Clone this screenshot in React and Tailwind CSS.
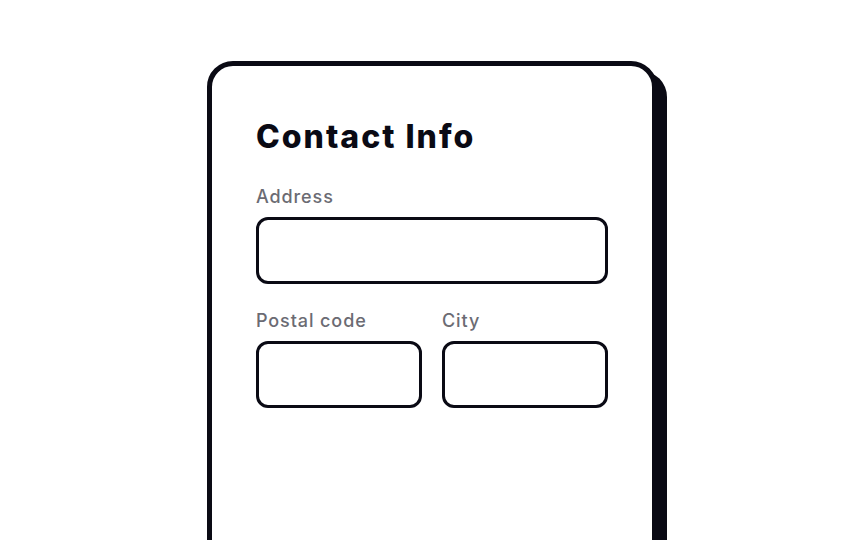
export default function App() {
    return (
        <div className="min-h-[540px] overflow-hidden bg-white font-['Inter',sans-serif]">
            <div className="flex justify-center pt-[61px]">
                <div className="h-[600px] w-[450px] rounded-[26px] border-[5px] border-[#0a0a14] bg-white px-[44px] pt-[51px] shadow-[10px_10px_0_0_#0a0a14]">
                    <h1 className="text-[32px] leading-10 font-extrabold tracking-[2px] text-[#0a0a14]">Contact Info</h1>

                    <div className="mt-[26px]">
                        <label className="block text-lg leading-7 font-medium tracking-[0.9px] text-[#6b6b73]">Address</label>
                        <input type="text" className="mt-1.5 block h-[67px] w-full rounded-xl border-[3px] border-[#0a0a14] bg-white outline-none" />
                    </div>

                    <div className="mt-[23px] grid grid-cols-2 gap-5">
                        <div>
                            <label className="block text-lg leading-7 font-medium tracking-[0.9px] text-[#6b6b73]">Postal code</label>
                            <input type="text" className="mt-1.5 block h-[67px] w-full rounded-xl border-[3px] border-[#0a0a14] bg-white outline-none" />
                        </div>
                        <div>
                            <label className="block text-lg leading-7 font-medium tracking-[0.9px] text-[#6b6b73]">City</label>
                            <input type="text" className="mt-1.5 block h-[67px] w-full rounded-xl border-[3px] border-[#0a0a14] bg-white outline-none" />
                        </div>
                    </div>
                </div>
            </div>
        </div>
    );
}
